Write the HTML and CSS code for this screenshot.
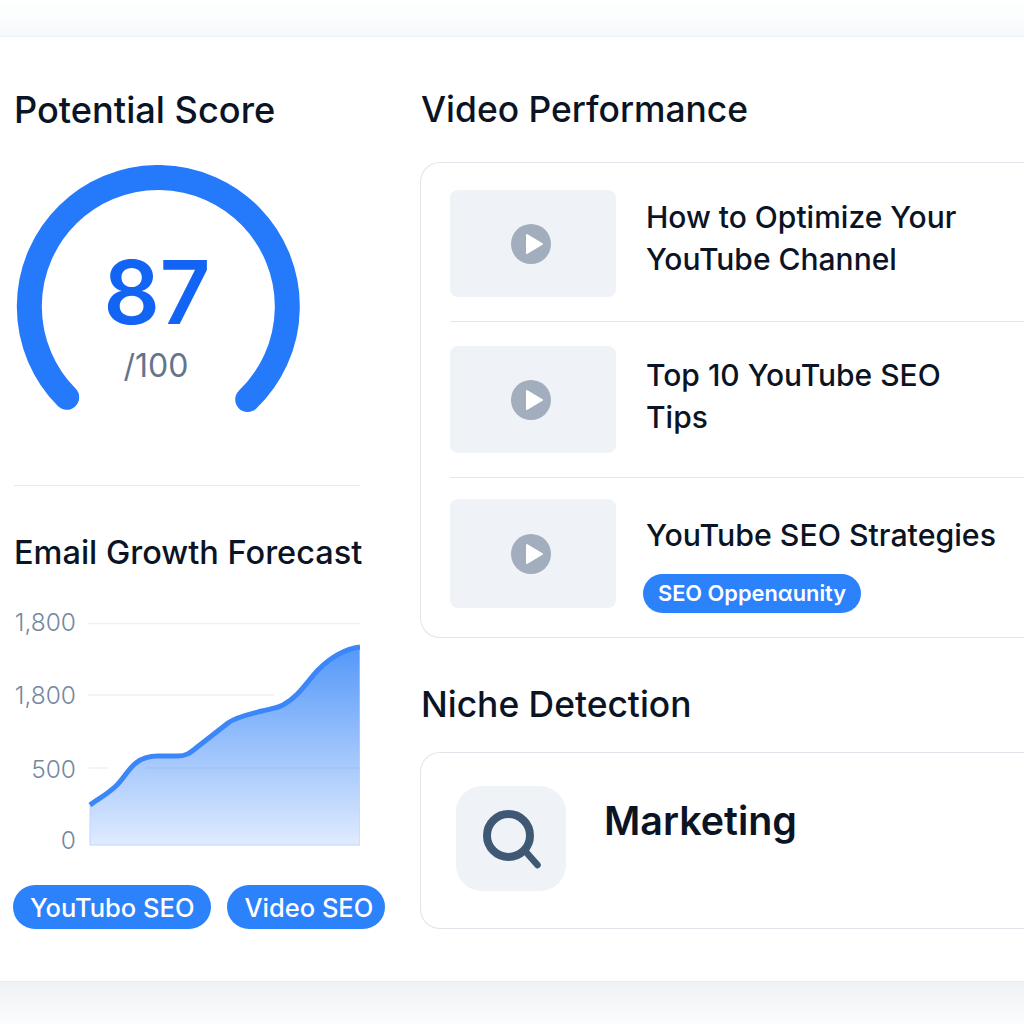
FILE: index.html
```html
<!DOCTYPE html>
<html lang="en">
<head>
    <meta charset="UTF-8">
    <meta name="viewport" content="width=device-width, initial-scale=1.0">
    <title>Channel Overview</title>
    <link rel="stylesheet" href="styles.css">
</head>
<body>
    <div class="band-top"></div>

    <main class="panel">
        <section class="col-left">
            <h2 class="heading heading-score">Potential Score</h2>

            <div class="gauge">
                <svg class="gauge-ring" width="300" height="250" viewBox="14 165 300 250">
                    <path d="M66.7 397.3 A129 129 0 1 1 247.7 399.5"></path>
                </svg>
                <div class="gauge-value">87</div>
                <div class="gauge-max">/100</div>
            </div>

            <hr class="divider">

            <h2 class="heading heading-small">Email Growth Forecast</h2>

            <svg class="chart" width="346" height="250" viewBox="14 605 346 250">
                <defs>
                    <linearGradient id="area-fill" x1="0" y1="0" x2="0" y2="1">
                        <stop offset="0" stop-color="#5498f9"></stop>
                        <stop offset="1" stop-color="#e0ebfe"></stop>
                    </linearGradient>
                </defs>
                <line class="grid" x1="88" y1="623.5" x2="360" y2="623.5"></line>
                <line class="grid" x1="88" y1="695" x2="274" y2="695"></line>
                <line class="grid" x1="89" y1="768" x2="107" y2="768"></line>
                <path class="area" d="M90 805 C98 799,108 794,117 785 C124 778,129 768,136 763 C143 757,151 756,158 756 L178 756 C186 756,190 753,196 748 L228 723 C236 717,250 714,262 711 C270 709,277 708,283 705 C298 697,306 683,318 670 C330 658,345 649,360 647 L360 845 L90 845 Z"></path>
                <line class="grid-over" x1="145" y1="768" x2="360" y2="768"></line>
                <path class="curve" d="M90 805 C98 799,108 794,117 785 C124 778,129 768,136 763 C143 757,151 756,158 756 L178 756 C186 756,190 753,196 748 L228 723 C236 717,250 714,262 711 C270 709,277 708,283 705 C298 697,306 683,318 670 C330 658,345 649,360 647"></path>
                <text class="axis" x="76" y="631">1,800</text>
                <text class="axis" x="76" y="704">1,800</text>
                <text class="axis" x="76" y="778">500</text>
                <text class="axis" x="76" y="849">0</text>
            </svg>

            <div class="tags">
                <span class="pill">YouTubo SEO</span>
                <span class="pill">Video SEO</span>
            </div>
        </section>

        <section class="col-right">
            <h2 class="heading">Video Performance</h2>

            <div class="card videos">
                <div class="video-row">
                    <div class="thumb">
                        <svg width="40" height="40" viewBox="0 0 40 40"><circle class="play-bg" cx="20" cy="20" r="20"></circle><path class="play-tri" d="M16 11 L31 20 L16 29 Z"></path></svg>
                    </div>
                    <div class="video-text">
                        <div class="video-title">How to Optimize Your<br>YouTube Channel</div>
                    </div>
                </div>
                <div class="video-row">
                    <div class="thumb">
                        <svg width="40" height="40" viewBox="0 0 40 40"><circle class="play-bg" cx="20" cy="20" r="20"></circle><path class="play-tri" d="M16 11 L31 20 L16 29 Z"></path></svg>
                    </div>
                    <div class="video-text second">
                        <div class="video-title">Top 10 YouTube SEO<br>Tips</div>
                    </div>
                </div>
                <div class="video-row last">
                    <div class="thumb tall">
                        <svg width="40" height="40" viewBox="0 0 40 40"><circle class="play-bg" cx="20" cy="20" r="20"></circle><path class="play-tri" d="M16 11 L31 20 L16 29 Z"></path></svg>
                    </div>
                    <div class="video-text third">
                        <div class="video-title">YouTube SEO Strategies</div>
                        <span class="pill pill-small">SEO Oppenαunity</span>
                    </div>
                </div>
            </div>

            <h2 class="heading niche-heading">Niche Detection</h2>

            <div class="card niche">
                <div class="niche-icon">
                    <svg width="64" height="64" viewBox="0 0 64 64">
                        <circle cx="29.5" cy="28.5" r="21.5"></circle>
                        <line x1="47" y1="45" x2="58.5" y2="58"></line>
                    </svg>
                </div>
                <div class="niche-name">Marketing</div>
            </div>
        </section>
    </main>

    <div class="band-bottom"></div>
</body>
</html>
```

FILE: styles.css
```css
body {
    margin: 0;
    height: 1024px;
    overflow: hidden;
    background: #ffffff;
    color: #0b1424;
    font-family: Inter, "Liberation Sans", sans-serif;
}
.band-top {
    height: 36px;
    background: linear-gradient(180deg, #feffff 0%, #f6f9fc 100%);
    border-bottom: 1px solid #eef2f6;
}
.band-bottom {
    height: 42px;
    background: linear-gradient(180deg, #eff2f5 0%, #fbfcfd 100%);
    border-top: 1px solid #e9edf0;
}
.panel {
    display: flex;
    gap: 60px;
    height: 944px;
    box-sizing: border-box;
    padding: 55px 0 0 14px;
    background: #ffffff;
}
.col-left {
    flex: 0 0 346px;
    min-width: 0;
}
.col-right {
    flex: 0 0 640px;
}
.heading {
    margin: 0 0 0 1px;
    font-size: 35.4px;
    font-weight: 500;
    line-height: 36px;
    white-space: nowrap;
}
.heading-score {
    margin-left: 0;
    font-size: 36.2px;
}
.heading-small {
    margin: 49px 0 0;
    font-size: 32.5px;
}

/* gauge */
.gauge {
    position: relative;
    height: 250px;
    margin-top: 37px;
}
.gauge-ring {
    display: block;
}
.gauge-ring path {
    fill: none;
    stroke: #2579fb;
    stroke-width: 25;
    stroke-linecap: round;
}
.gauge-value {
    position: absolute;
    left: 0;
    width: 286px;
    top: 75px;
    text-align: center;
    font-size: 88px;
    font-weight: 600;
    line-height: 104px;
    color: #1264f5;
}
.gauge-max {
    position: absolute;
    left: 0;
    width: 284px;
    top: 181px;
    text-align: center;
    font-size: 32px;
    line-height: 40px;
    color: #64748b;
}
.divider {
    margin: 70px 0 0;
    border: 0;
    border-top: 1px solid #e6eaee;
}

/* chart */
.chart {
    display: block;
    margin-top: 34px;
}
.grid {
    stroke: #edf1f5;
    stroke-width: 1.5;
}
.grid-over {
    stroke: rgba(90, 120, 170, 0.14);
    stroke-width: 1;
}
.area {
    fill: url(#area-fill);
    stroke: #bcd6fd;
    stroke-width: 1;
}
.curve {
    fill: none;
    stroke: #3b86f8;
    stroke-width: 5;
}
.axis {
    fill: #7389a0;
    font-size: 24.5px;
    font-weight: 300;
    text-anchor: end;
}

/* pills */
.tags {
    display: flex;
    gap: 16px;
    margin: 30px 0 0 -1px;
}
.pill {
    display: inline-block;
    height: 44px;
    line-height: 45px;
    padding: 0 12px 0 17px;
    border-radius: 22px;
    background: #2c82fb;
    color: #ffffff;
    font-size: 25.5px;
    font-weight: 500;
    white-space: nowrap;
}
.pill:first-child {
    padding-right: 17px;
}
.pill-small {
    height: 39px;
    line-height: 38px;
    margin: 18px 0 0 -3px;
    padding: 0 15px;
    font-size: 21.8px;
    font-weight: 600;
    border-radius: 20px;
}

/* cards */
.card {
    box-sizing: border-box;
    border: 1px solid #dfe5ea;
    border-radius: 20px 0 0 20px;
    border-right: 0;
    background: #ffffff;
}
.videos {
    height: 476px;
    margin-top: 34px;
    padding: 27px 0 0 29px;
}
.video-row {
    display: flex;
    gap: 30px;
    padding: 0 0 24px;
    margin-bottom: 24px;
    border-bottom: 1px solid #e3e7eb;
}
.video-row + .video-row {
    margin-bottom: 21px;
}
.video-row.last {
    margin: 0;
    padding: 0;
    border-bottom: 0;
}
.thumb {
    display: flex;
    flex: 0 0 166px;
    align-items: center;
    justify-content: center;
    height: 107px;
    border-radius: 8px;
    background: #eff3f7;
}
.thumb svg {
    margin-left: -4px;
}
.thumb.tall {
    height: 109px;
}
.play-bg {
    fill: #a2aebd;
}
.play-tri {
    fill: #ffffff;
    stroke: #ffffff;
    stroke-width: 2;
    stroke-linejoin: round;
}
.video-text {
    padding-top: 6px;
}
.video-text.second {
    padding-top: 8px;
}
.video-text.third {
    padding-top: 15px;
}
.video-title {
    font-size: 30px;
    font-weight: 500;
    line-height: 42px;
}
.third .video-title {
    font-size: 30.3px;
}

.niche-heading {
    margin-top: 49px;
}
.niche {
    display: flex;
    gap: 38px;
    height: 177px;
    margin-top: 29px;
    padding: 33px 0 0 35px;
}
.niche-icon {
    display: flex;
    flex: 0 0 110px;
    align-items: center;
    justify-content: center;
    height: 105px;
    border-radius: 26px;
    background: #eff3f7;
}
.niche-icon svg {
    fill: none;
    stroke: #3f5874;
    stroke-width: 8;
    stroke-linecap: round;
}
.niche-icon line {
    stroke-width: 6.5;
}
.niche-name {
    margin-top: 13px;
    font-size: 39.4px;
    font-weight: 600;
    line-height: 44px;
}
```
